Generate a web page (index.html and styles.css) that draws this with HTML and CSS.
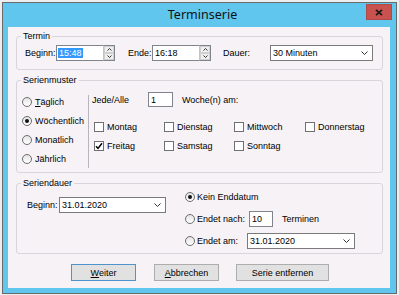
FILE: index.html
```html
<!DOCTYPE html>
<html lang="de">
<head>
<meta charset="utf-8">
<title>Terminserie</title>
<link rel="stylesheet" href="styles.css">
</head>
<body>
<div class="window">
  <div class="titlebar">
    <span class="title">Terminserie</span>
    <button class="close" aria-label="Schließen">
      <svg width="8" height="7" viewBox="0 0 8 7"><path d="M1 0.8 L7 6.2 M7 0.8 L1 6.2" stroke="#1a1a1a" stroke-width="1.8" fill="none"/></svg>
    </button>
  </div>
  <div class="client">
    <fieldset class="group">
      <legend>Termin</legend>
      <div class="termin-row">
        <span class="lbl w-beginn">Beginn:</span>
        <div class="spin">
          <div class="field"><span class="sel">15:48</span></div>
          <div class="spin-btns">
            <span><svg width="5" height="3" viewBox="0 0 5 3"><path d="M0.5 2.5 L2.5 0.5 L4.5 2.5" stroke="#333" stroke-width="1" fill="none"/></svg></span>
            <span><svg width="5" height="3" viewBox="0 0 5 3"><path d="M0.5 0.5 L2.5 2.5 L4.5 0.5" stroke="#333" stroke-width="1" fill="none"/></svg></span>
          </div>
        </div>
        <span class="lbl w-ende">Ende:</span>
        <div class="spin">
          <div class="field"><span>16:18</span></div>
          <div class="spin-btns">
            <span><svg width="5" height="3" viewBox="0 0 5 3"><path d="M0.5 2.5 L2.5 0.5 L4.5 2.5" stroke="#333" stroke-width="1" fill="none"/></svg></span>
            <span><svg width="5" height="3" viewBox="0 0 5 3"><path d="M0.5 0.5 L2.5 2.5 L4.5 0.5" stroke="#333" stroke-width="1" fill="none"/></svg></span>
          </div>
        </div>
        <span class="lbl w-dauer">Dauer:</span>
        <div class="combo w-combo-dauer">
          <span>30 Minuten</span>
          <svg width="7" height="4" viewBox="0 0 7 4"><path d="M0.5 0.5 L3.5 3.5 L6.5 0.5" stroke="#333" stroke-width="1" fill="none"/></svg>
        </div>
      </div>
    </fieldset>

    <fieldset class="group">
      <legend>Serienmuster</legend>
      <div class="muster">
        <div class="muster-left">
          <div class="opt"><span class="radio"></span><span><u>T</u>äglich</span></div>
          <div class="opt"><span class="radio on"></span><span>Wöchentlich</span></div>
          <div class="opt"><span class="radio"></span><span>Monatlich</span></div>
          <div class="opt"><span class="radio"></span><span>Jährlich</span></div>
        </div>
        <div class="sep"></div>
        <div class="muster-right">
          <div class="jede-row">
            <span class="lbl w-jede">Jede/Alle</span>
            <div class="field w-num"><span>1</span></div>
            <span class="woche">Woche(n) am:</span>
          </div>
          <div class="days">
            <div class="opt"><span class="check"></span><span>Montag</span></div>
            <div class="opt"><span class="check"></span><span>Dienstag</span></div>
            <div class="opt"><span class="check"></span><span>Mittwoch</span></div>
            <div class="opt"><span class="check"></span><span>Donnerstag</span></div>
            <div class="opt"><span class="check on"><svg width="8" height="8" viewBox="0 0 8 8"><path d="M1 4.2 L3 6.4 L7 1.2" stroke="#000" stroke-width="1.5" fill="none"/></svg></span><span>Freitag</span></div>
            <div class="opt"><span class="check"></span><span>Samstag</span></div>
            <div class="opt"><span class="check"></span><span>Sonntag</span></div>
          </div>
        </div>
      </div>
    </fieldset>

    <fieldset class="group">
      <legend>Seriendauer</legend>
      <div class="dauer">
        <div class="dauer-left">
          <span class="lbl w-beginn2">Beginn:</span>
          <div class="combo w-combo-beginn">
            <span>31.01.2020</span>
            <svg width="7" height="4" viewBox="0 0 7 4"><path d="M0.5 0.5 L3.5 3.5 L6.5 0.5" stroke="#333" stroke-width="1" fill="none"/></svg>
          </div>
        </div>
        <div class="dauer-right">
          <div class="opt2"><span class="radio on"></span><span>Kein Enddatum</span></div>
          <div class="opt2"><span class="radio"></span><span class="lbl w-nach">Endet nach:</span><div class="field w-count"><span>10</span></div><span class="termine">Terminen</span></div>
          <div class="opt2"><span class="radio"></span><span class="lbl w-am">Endet am:</span>
            <div class="combo w-combo-am">
              <span>31.01.2020</span>
              <svg width="7" height="4" viewBox="0 0 7 4"><path d="M0.5 0.5 L3.5 3.5 L6.5 0.5" stroke="#333" stroke-width="1" fill="none"/></svg>
            </div>
          </div>
        </div>
      </div>
    </fieldset>

    <div class="buttons">
      <button class="btn default w-btn"><u>W</u>eiter</button>
      <button class="btn w-btn"><u>A</u>bbrechen</button>
      <button class="btn w-btn-wide">Serie entfernen</button>
    </div>
  </div>
</div>
</body>
</html>
```

FILE: styles.css
```css
* { box-sizing: border-box; }
html, body { margin: 0; }
body {
  width: 399px;
  height: 295px;
  overflow: hidden;
  background: #eceef0;
  padding: 2px 0 0 2px;
  font-family: "Liberation Sans", Arial, sans-serif;
  font-size: 9px;
  color: #000;
}
.window {
  width: 395px;
  height: 292px;
  border: 1px solid #6a6a6a;
  background: #60c6ee;
  display: flex;
  flex-direction: column;
}
.titlebar {
  height: 24px;
  flex: none;
  display: grid;
  grid-template-columns: 1fr auto 1fr;
  padding-left: 6px;
}
.title {
  grid-column: 2;
  font-family: "Noto Sans", "Liberation Sans", sans-serif;
  font-size: 12.5px;
  line-height: 24px;
  color: #111;
}
.close {
  grid-column: 3;
  justify-self: end;
  align-self: start;
  margin: 1px 4px 0 0;
  width: 26px;
  height: 16px;
  padding: 0;
  border: 1px solid #b04a48;
  background: #c9524f;
  display: flex;
  align-items: center;
  justify-content: center;
}
.client {
  margin: 0 6px 0 5px;
  height: 261px;
  background: #f6f2f6;
  padding: 4px 7px 0 8px;
}
.group {
  margin: 0;
  padding: 0;
  min-width: 0;
  border: 1px solid #d8d6dc;
  border-radius: 3px;
}
.group + .group { margin-top: 5px; }
.group legend {
  padding: 0 2px;
  margin-left: 4px;
  line-height: 11px;
}
.lbl { flex: none; }
.field {
  flex: none;
  height: 16px;
  border: 1px solid #80848c;
  background: #fff;
  display: flex;
  align-items: center;
  padding-left: 2px;
}
.sel { background: #3399ff; color: #fff; padding: 0 1px; margin-left: -1px; }
.combo {
  flex: none;
  height: 16px;
  border: 1px solid #7a7a7a;
  background: #fff;
  display: flex;
  align-items: center;
  justify-content: space-between;
  padding: 0 4px 0 2px;
}

/* Termin */
.termin-row {
  display: flex;
  align-items: center;
  padding: 3px 0 8px 8px;
}
.w-beginn { width: 31px; }
.w-ende { width: 24px; margin-left: 13px; }
.w-dauer { width: 47px; margin-left: 12px; }
.w-combo-dauer { width: 103px; }
.spin { display: flex; width: 59px; height: 16px; flex: none; }
.spin .field { flex: 1; border-right: none; }
.spin-btns { width: 12px; display: flex; flex-direction: column; border: 1px solid #80848c; border-left-color: #c4c4c4; background: #fff; }
.spin-btns span {
  flex: 1;
  background: #efefef;
  border: 1px solid #d0d0d0;
  display: flex;
  align-items: center;
  justify-content: center;
}

/* Serienmuster */
.muster { display: flex; padding: 6px 0 4px 5px; }
.muster-left { width: 66px; flex: none; }
.opt { height: 19px; display: flex; align-items: center; gap: 3px; white-space: nowrap; }
.radio {
  flex: none;
  width: 10px;
  height: 10px;
  border-radius: 50%;
  border: 1px solid #6e6e6e;
  background: linear-gradient(#e4e4e4, #fff);
  display: flex;
  align-items: center;
  justify-content: center;
}
.radio.on::after {
  content: "";
  width: 4px;
  height: 4px;
  border-radius: 50%;
  background: #111;
}
.sep { width: 1px; background: #b8b6bc; margin: 3px 0 0; flex: none; }
.muster-right { padding-left: 3px; }
.jede-row { display: flex; align-items: center; height: 15px; }
.w-jede { width: 56px; }
.w-num { width: 25px; height: 15px; }
.woche { margin-left: 9px; }
.days {
  display: grid;
  grid-template-columns: 70px 70px 71px auto;
  margin: 10px 0 0 2px;
}
.check {
  flex: none;
  width: 10px;
  height: 10px;
  border: 1px solid #707070;
  background: #fff;
  display: flex;
  align-items: center;
  justify-content: center;
  margin-right: 0;
}

/* Seriendauer */
.dauer { display: flex; padding: 0 0 4px 10px; }
.dauer-left { display: flex; align-items: center; margin-top: 8px; align-self: flex-start; }
.w-beginn2 { width: 32px; }
.w-combo-beginn { width: 107px; }
.dauer-right { margin-left: 19px; display: flex; flex-direction: column; gap: 6px; }
.opt2 { height: 16px; display: flex; align-items: center; gap: 2px; white-space: nowrap; }
.w-nach { width: 50px; }
.w-count { width: 24px; }
.termine { margin-left: 7px; }
.w-am { width: 48px; }
.w-combo-am { width: 108px; }

/* Buttons */
.buttons { display: flex; margin-top: 10px; padding-left: 55px; gap: 17px; }
.btn {
  height: 17px;
  padding: 0;
  border: 1px solid #adadad;
  background: #e1e1e1;
  font: inherit;
  color: #000;
}
.btn.default { border-color: #4d94cc; margin-right: 1px; }
.w-btn { width: 65px; }
.w-btn-wide { width: 93px; }
```
